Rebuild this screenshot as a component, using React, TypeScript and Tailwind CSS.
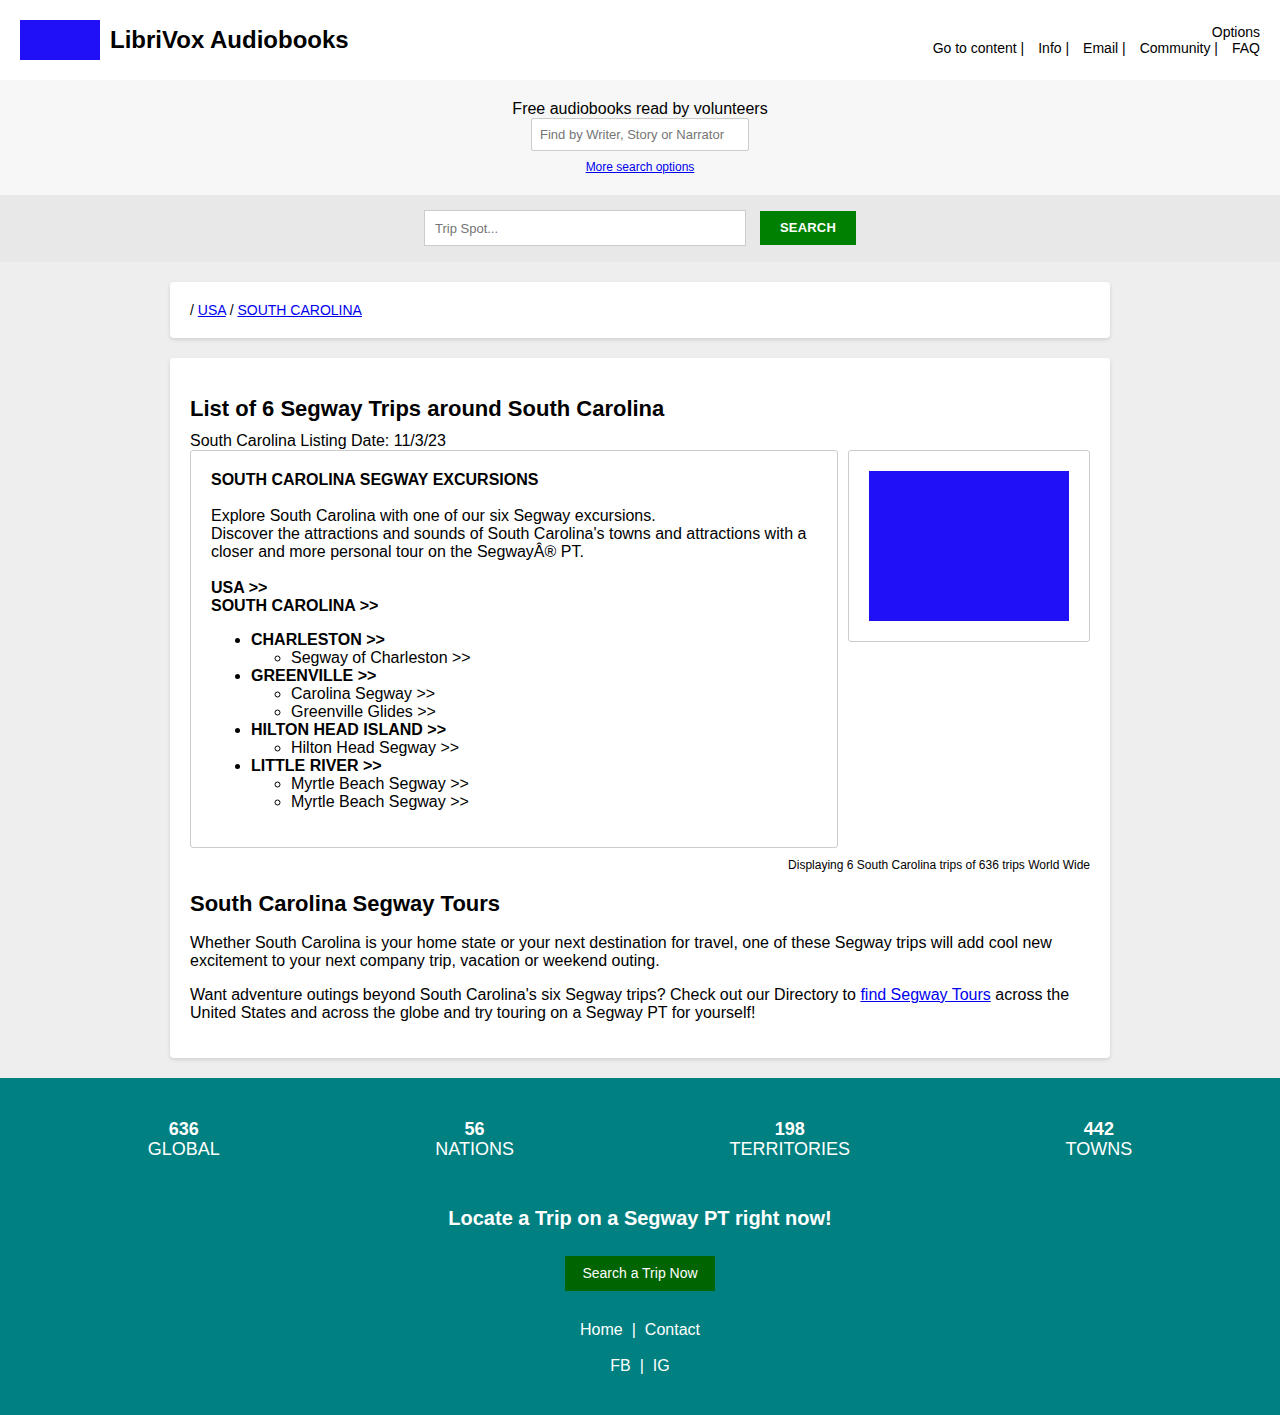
import React from "react";

const font = { fontFamily: '"Liberation Sans", Arial, Helvetica, sans-serif' };

export default function App() {
  return (
    <div style={font} className="bg-[#eeeeee] text-black">
      {/* Header */}
      <header className="h-[80px] bg-white flex items-center justify-between px-5">
        <div className="flex items-center gap-[10px]">
          <div className="w-[80px] h-[40px] bg-[#1f10f6]" />
          <div className="text-[24px] font-bold leading-[28px]">LibriVox Audiobooks</div>
        </div>
        <div className="flex flex-col items-end text-[14px] leading-[16px]">
          <div>Options</div>
          <div className="flex gap-[14px]">
            <span>Go to content |</span>
            <span>Info |</span>
            <span>Email |</span>
            <span>Community |</span>
            <span>FAQ</span>
          </div>
        </div>
      </header>

      {/* Search strip */}
      <section className="bg-[#f7f7f7] pt-[20px] pb-[21px] flex flex-col items-center">
        <div className="text-[16px] leading-[18px]">Free audiobooks read by volunteers</div>
        <input
          className="w-[218px] h-[33px] bg-white border border-[#cccccc] rounded-[2px] px-[8px] text-[13px] placeholder:text-[#757575] outline-none"
          placeholder="Find by Writer, Story or Narrator"
        />
        <a href="#" className="mt-[9px] text-[12px] leading-[14px] text-[#0000ee] underline">
          More search options
        </a>
      </section>

      {/* Trip search */}
      <section className="bg-[#e8e8e8] h-[67px] pt-[15px] flex items-start justify-center gap-[14px]">
        <input
          className="w-[322px] h-[36px] bg-white border border-[#cccccc] px-[10px] text-[13px] placeholder:text-[#757575] outline-none"
          placeholder="Trip Spot..."
        />
        <button className="mt-px w-[96px] h-[34px] bg-[#008000] text-white text-[13px] font-bold tracking-[0.2px]">
          SEARCH
        </button>
      </section>

      {/* Main */}
      <main className="py-5 flex flex-col items-center gap-5">
        <div className="w-[940px] bg-white rounded-[4px] shadow-[0_2px_4px_rgba(0,0,0,0.12)] p-5 text-[14px] leading-[16px]">
          / <a href="#" className="text-[#0000ee] underline">USA</a> /{" "}
          <a href="#" className="text-[#0000ee] underline">SOUTH CAROLINA</a>
        </div>

        <div className="w-[940px] bg-white rounded-[4px] shadow-[0_2px_4px_rgba(0,0,0,0.12)] p-5">
          <h2 className="mt-[18px] text-[22px] leading-[25px] font-bold">
            List of 6 Segway Trips around South Carolina
          </h2>
          <div className="mt-[11px] text-[16px] leading-[18px]">South Carolina Listing Date: 11/3/23</div>

          <div className="flex gap-[10px] items-start">
            <div className="w-[648px] border border-[#cccccc] rounded-[3px] p-5 text-[16px] leading-[18px]">
              <div className="font-bold">SOUTH CAROLINA SEGWAY EXCURSIONS</div>
              <div className="mt-[18px]">
                Explore South Carolina with one of our six Segway excursions.
                <br />
                Discover the attractions and sounds of South Carolina's towns and attractions with a closer and more
                personal tour on the SegwayÂ® PT.
              </div>
              <div className="mt-[18px] font-bold">
                USA &gt;&gt;
                <br />
                SOUTH CAROLINA &gt;&gt;
              </div>
              <ul className="my-4 pl-10 list-disc">
                <li>
                  <span className="font-bold">CHARLESTON &gt;&gt;</span>
                  <ul className="pl-10 list-[circle]">
                    <li>Segway of Charleston &gt;&gt;</li>
                  </ul>
                </li>
                <li>
                  <span className="font-bold">GREENVILLE &gt;&gt;</span>
                  <ul className="pl-10 list-[circle]">
                    <li>Carolina Segway &gt;&gt;</li>
                    <li>Greenville Glides &gt;&gt;</li>
                  </ul>
                </li>
                <li>
                  <span className="font-bold">HILTON HEAD ISLAND &gt;&gt;</span>
                  <ul className="pl-10 list-[circle]">
                    <li>Hilton Head Segway &gt;&gt;</li>
                  </ul>
                </li>
                <li>
                  <span className="font-bold">LITTLE RIVER &gt;&gt;</span>
                  <ul className="pl-10 list-[circle]">
                    <li>Myrtle Beach Segway &gt;&gt;</li>
                    <li>Myrtle Beach Segway &gt;&gt;</li>
                  </ul>
                </li>
              </ul>
            </div>
            <div className="w-[242px] border border-[#cccccc] rounded-[3px] p-5">
              <div className="w-[200px] h-[150px] bg-[#1f10f6]" />
            </div>
          </div>

          <div className="mt-[10px] text-right text-[12px] leading-[14px]">
            Displaying 6 South Carolina trips of 636 trips World Wide
          </div>

          <h2 className="mt-[19px] text-[22px] leading-[25px] font-bold">South Carolina Segway Tours</h2>
          <p className="mt-[18px] text-[16px] leading-[18px]">
            Whether South Carolina is your home state or your next destination for travel, one of these Segway trips
            will add cool new excitement to your next company trip, vacation or weekend outing.
          </p>
          <p className="mt-4 mb-4 text-[16px] leading-[18px]">
            Want adventure outings beyond South Carolina's six Segway trips? Check out our Directory to{" "}
            <a href="#" className="text-[#0000ee] underline">
              find Segway Tours
            </a>{" "}
            across the United States and across the globe and try touring on a Segway PT for yourself!
          </p>
        </div>
      </main>

      {/* Footer */}
      <footer className="bg-[#008080] text-white pt-[41px] pb-[41px] flex flex-col items-center">
        <div className="w-full px-10 flex justify-around text-center text-[18px] leading-[20px]">
          <div>
            <div className="font-bold">636</div>
            <div>GLOBAL</div>
          </div>
          <div>
            <div className="font-bold">56</div>
            <div>NATIONS</div>
          </div>
          <div>
            <div className="font-bold">198</div>
            <div>TERRITORIES</div>
          </div>
          <div>
            <div className="font-bold">442</div>
            <div>TOWNS</div>
          </div>
        </div>
        <div className="mt-[47px] text-[20px] leading-[24px] font-bold">Locate a Trip on a Segway PT right now!</div>
        <button className="mt-[26px] w-[150px] h-[35px] bg-[#006400] text-white text-[14px]">Search a Trip Now</button>
        <div className="mt-[30px] flex gap-[9px] text-[16px] leading-[18px]">
          <span>Home</span>
          <span>|</span>
          <span>Contact</span>
        </div>
        <div className="mt-[18px] flex gap-[9px] text-[16px] leading-[18px]">
          <span>FB</span>
          <span>|</span>
          <span>IG</span>
        </div>
      </footer>
    </div>
  );
}
